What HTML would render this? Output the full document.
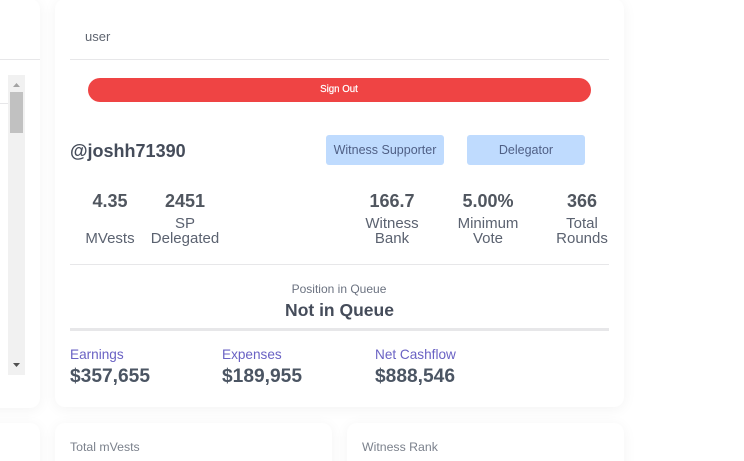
<!DOCTYPE html>
<html>
<head>
<meta charset="utf-8">
<style>
html,body{margin:0;padding:0;width:744px;height:461px;overflow:hidden;background:#fff;}
body{position:relative;font-family:"Liberation Sans",sans-serif;color:#4b5563;}
.card{position:absolute;background:#fff;border-radius:10px;box-shadow:0 2px 14px rgba(0,0,0,.05);}
.t{position:absolute;white-space:nowrap;line-height:1;filter:blur(.25px);}
.c{transform:translateX(-50%);}
.line{position:absolute;background:#e7e7e9;}
.num{font-size:18px;font-weight:bold;color:#50565f;}
.lab{font-size:15px;color:#5b6270;}
.pur{font-size:13.6px;color:#6a62c4;}
.money{font-size:19.200px;font-weight:bold;color:#4b5563;}
.badge{position:absolute;top:135px;height:30px;background:#bfdbfe;border-radius:3px;color:#4f5f85;font-size:12.500px;line-height:30px;text-align:center;white-space:nowrap;}
</style>
</head>
<body>
<div class="card" style="left:-30px;top:-1px;width:70px;height:409px;"></div>
<div class="card" style="left:55px;top:-1px;width:569px;height:408px;"></div>
<div class="card" style="left:-30px;top:423px;width:70px;height:60px;"></div>
<div class="card" style="left:55px;top:423px;width:277px;height:60px;"></div>
<div class="card" style="left:347px;top:423px;width:277px;height:60px;"></div>

<div class="line" style="left:0;top:59px;width:40px;height:1px;"></div>
<div class="line" style="left:0;top:103px;width:9px;height:1px;"></div>
<div style="position:absolute;left:8px;top:75px;width:17px;height:300px;background:#f1f1f1;"></div>
<div style="position:absolute;left:10px;top:92px;width:13px;height:41px;background:#c1c1c1;"></div>
<svg style="position:absolute;left:8px;top:75px" width="17" height="300">
<path d="M5 12L12 12L8.500 8Z" fill="#a3a3a3"/>
<path d="M5 288L12 288L8.500 292Z" fill="#505050"/>
</svg>

<div class="t" style="left:85px;top:30px;font-size:13px;color:#5f6570;">user</div>
<div class="line" style="left:70px;top:59px;width:539px;height:1px;"></div>
<div style="position:absolute;left:88px;top:78px;width:503px;height:24px;background:#ef4444;border-radius:12px;"></div>
<div class="t c" style="left:339px;top:85px;font-size:9.700px;color:#fff;-webkit-text-stroke:.2px #fff;">Sign Out</div>

<div class="t" style="left:70px;top:142px;font-size:18px;font-weight:bold;color:#454c5a;">@joshh71390</div>
<div class="badge" style="left:326px;width:118px;">Witness Supporter</div>
<div class="badge" style="left:467px;width:118px;">Delegator</div>

<div class="t c num" style="left:110px;top:192px;">4.35</div>
<div class="t c num" style="left:185px;top:192px;">2451</div>
<div class="t c num" style="left:392px;top:192px;">166.7</div>
<div class="t c num" style="left:488px;top:192px;">5.00%</div>
<div class="t c num" style="left:582px;top:192px;">366</div>

<div class="t c lab" style="left:110px;top:231px;">MVests</div>
<div class="t c lab" style="left:185px;top:216px;">SP</div>
<div class="t c lab" style="left:185px;top:231px;">Delegated</div>
<div class="t c lab" style="left:392px;top:216px;">Witness</div>
<div class="t c lab" style="left:392px;top:231px;">Bank</div>
<div class="t c lab" style="left:488px;top:216px;">Minimum</div>
<div class="t c lab" style="left:488px;top:231px;">Vote</div>
<div class="t c lab" style="left:582px;top:216px;">Total</div>
<div class="t c lab" style="left:582px;top:231px;">Rounds</div>

<div class="line" style="left:70px;top:264px;width:539px;height:1px;"></div>
<div class="t c" style="left:339px;top:283px;font-size:12px;color:#6b7280;">Position in Queue</div>
<div class="t c" style="left:339.500px;top:302px;font-size:17.500px;font-weight:bold;color:#454c5a;">Not in Queue</div>
<div class="line" style="left:70px;top:328px;width:539px;height:3px;"></div>

<div class="t pur" style="left:70px;top:348px;">Earnings</div>
<div class="t pur" style="left:222px;top:348px;">Expenses</div>
<div class="t pur" style="left:375px;top:348px;">Net Cashflow</div>
<div class="t money" style="left:70px;top:367px;">$357,655</div>
<div class="t money" style="left:222px;top:367px;">$189,955</div>
<div class="t money" style="left:375px;top:367px;">$888,546</div>

<div class="t" style="left:70px;top:441px;font-size:12.300px;color:#7b818c;">Total mVests</div>
<div class="t" style="left:362px;top:441px;font-size:12.300px;color:#7b818c;">Witness Rank</div>
</body>
</html>
